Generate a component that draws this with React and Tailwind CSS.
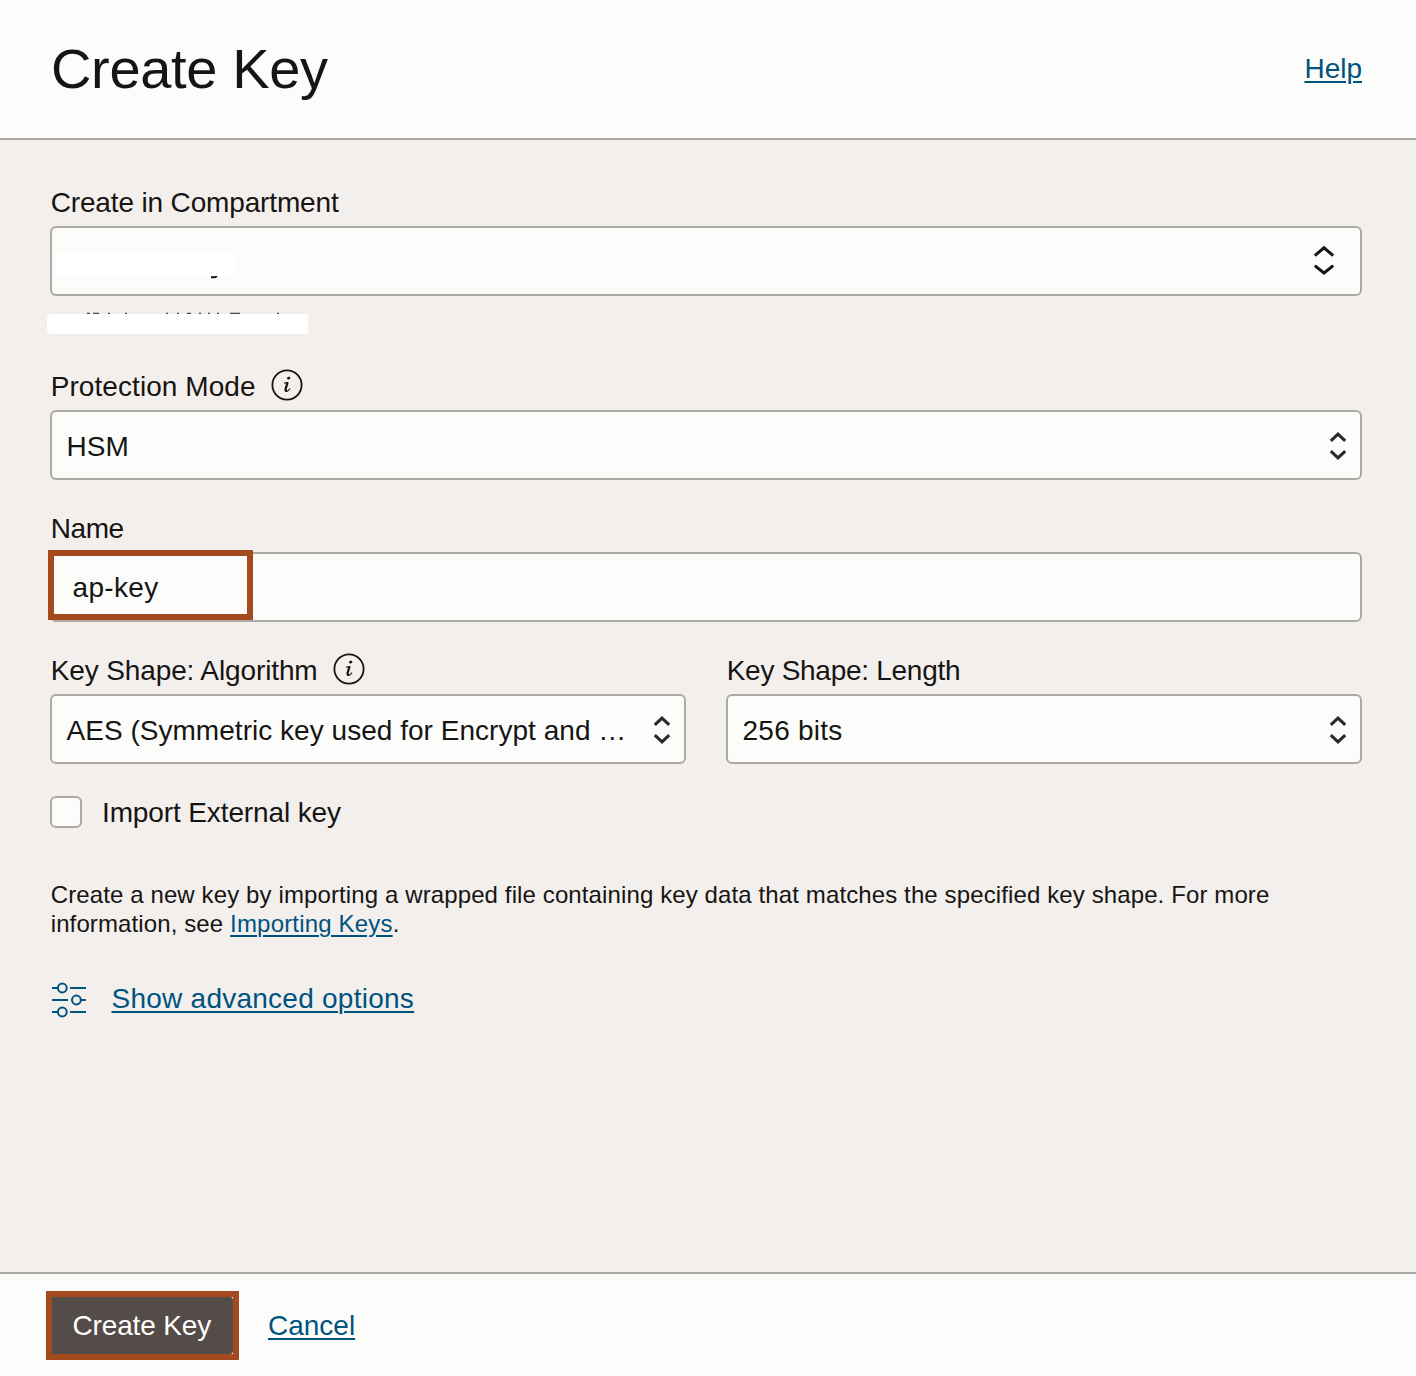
const box = "rounded-[6px] border-2 border-[#aea8a2] bg-[#fcfdfa]";
const link = "text-[#00537f] underline decoration-2 underline-offset-[3px]";

function InfoIcon() {
  return (
    <svg className="h-8 w-8 shrink-0" viewBox="0 0 32 32" fill="none" stroke="#161513">
      <circle cx="16" cy="16" r="14.6" strokeWidth="1.8" />
      <path d="M17.3 9.2L18.1 9" strokeWidth="2.5" strokeLinecap="round" />
      <path d="M13.2 14.1L17.2 13.5" strokeWidth="1.2" />
      <path d="M16.5 13.5L14.7 19.8C14.2 21.8 15 22.3 16.2 21.5" strokeWidth="2.3" />
      <path d="M14.8 22.2C16.4 22.4 18 21.2 19 19.4" strokeWidth="1.1" />
    </svg>
  );
}

function Chevrons() {
  return (
    <svg className="mt-0.5 h-[30px] w-5 shrink-0" viewBox="0 0 20 30" fill="none" stroke="#2b2a28" strokeWidth="3.1">
      <path d="M2.8 9.9L10 3.2L17.2 9.9" />
      <path d="M2.8 20.1L10 26.8L17.2 20.1" />
    </svg>
  );
}

function LargeChevrons() {
  return (
    <svg className="-mt-[3px] h-[30px] w-6 shrink-0" viewBox="0 0 24 30" fill="none" stroke="#161513" strokeWidth="3">
      <path d="M2.8 10.6L12 2.8L21.2 10.6" />
      <path d="M2.8 20.6L12 28L21.2 20.6" />
    </svg>
  );
}

function Field({ label, info, children, tracking = "" }) {
  return (
    <div className="flex flex-1 flex-col gap-2">
      <div className="flex h-8 items-center gap-[15px] pl-[0.7px]">
        <span className={"pt-0.5 " + tracking}>{label}</span>
        {info && <span className="-mt-0.5 flex"><InfoIcon /></span>}
      </div>
      {children}
    </div>
  );
}

function Select({ value, tracking = "" }) {
  return (
    <div className={"flex h-[70px] items-center justify-between pr-3 pl-[14.5px] " + box}>
      <span className={"pt-1 " + tracking}>{value}</span>
      <Chevrons />
    </div>
  );
}

function AdvancedIcon() {
  return (
    <svg className="h-9 w-9" viewBox="0 0 36 36" fill="none" stroke="#00537f" strokeWidth="2">
      <path d="M1 6H7M19 6H35M1 18H17M30 18H35M1 30H7M19 30H35" />
      <circle cx="11.3" cy="6" r="4.4" />
      <circle cx="25.4" cy="18" r="4.4" />
      <circle cx="11.3" cy="30" r="4.4" />
    </svg>
  );
}

export default function App() {
  return (
    <div className="flex h-[1376px] w-[1416px] flex-col overflow-hidden bg-[#f3efec] font-['Liberation_Sans',sans-serif] text-[28px] leading-8 text-[#161513]">
      <header className="flex h-[140px] shrink-0 items-center justify-between border-b-2 border-[#aea8a2] bg-[#fcfdfa] pr-[54px] pl-[51px]">
        <h1 className="text-[56px] leading-[64px] tracking-[-0.35px]">Create Key</h1>
        <a className={link}>Help</a>
      </header>

      <main className="flex flex-1 flex-col pt-[46px] pr-[54px] pl-[50px]">
        <div className="relative flex h-[152px] flex-col">
          <Field label="Create in Compartment" tracking="tracking-[-0.15px]">
            <div className={"flex h-[70px] items-center justify-end pr-6 " + box}>
              <LargeChevrons />
            </div>
          </Field>
          <svg className="absolute top-[64px] -left-[4px] h-[88px] w-[272px]" viewBox="46 250 272 88" fill="none">
            <path d="M211 277.3H214.3Q216 277.3 217 275.6" stroke="#161513" strokeWidth="2" />
            <g stroke="#4a4845" strokeWidth="1.2">
              <path d="M87 313.4h3M93 313.4h6M108 313.4h2M125 313.4h2M166 313.4h2M177 313.4h2M187 313.4h4M199 313.4h2M208 313.4h2M217 313.4h2M230 313.4h10M277 313.4h2" />
            </g>
            <rect x="56" y="253" width="179" height="23" rx="4" fill="#fff" />
            <rect x="47" y="314" width="261" height="20" rx="4" fill="#fff" />
          </svg>
        </div>

        <div className="mt-8 flex flex-col gap-8">
          <Field label="Protection Mode" info tracking="tracking-[0.07px]">
            <Select value="HSM" />
          </Field>
          <Field label="Name" tracking="tracking-[-0.4px]">
            <div className={"relative flex h-[70px] items-center pl-[20.5px] " + box}>
              <span className="pt-0.5 tracking-[0.35px]">ap-key</span>
              <div className="absolute -top-1 -left-1 h-[70px] w-[205px] border-6 border-[#a5491f]" />
            </div>
          </Field>
          <div className="flex gap-10">
            <Field label="Key Shape: Algorithm" info tracking="tracking-[-0.12px]">
              <Select value="AES (Symmetric key used for Encrypt and …" tracking="tracking-[0.03px]" />
            </Field>
            <Field label="Key Shape: Length" tracking="tracking-[-0.27px]">
              <Select value="256 bits" tracking="tracking-[0.25px]" />
            </Field>
          </div>
          <label className="flex h-8 items-center gap-5">
            <span className={"h-8 w-8 " + box} />
            <span className="pt-0.5 tracking-[-0.12px]">Import External key</span>
          </label>
        </div>

        <p className="mt-[52px] pl-[0.7px] text-[24px] leading-[29px] tracking-[0.115px] whitespace-nowrap">
          Create a new key by importing a wrapped file containing key data that matches the specified key shape. For more
          <br />
          information, see <a className={link + " tracking-[0.18px]"}>Importing Keys</a>.
        </p>

        <div className="mt-11 flex h-9 items-start gap-[24.5px] pl-px">
          <AdvancedIcon />
          <a className={link + " mt-px tracking-[0.25px]"}>Show advanced options</a>
        </div>
      </main>

      <footer className="flex h-[104px] shrink-0 items-start gap-[29px] border-t-2 border-[#aea8a2] bg-[#fcfdfa] pt-[17px] pl-[46px]">
        <button className="flex h-[69px] w-[193px] items-stretch border-6 border-[#a5491f] bg-white">
          <span className="flex flex-1 items-center rounded-r-[3px] bg-[#544c48] pl-[20.5px] tracking-[-0.15px] text-white">Create Key</span>
        </button>
        <a className={link + " mt-[19px]"}>Cancel</a>
      </footer>
    </div>
  );
}
